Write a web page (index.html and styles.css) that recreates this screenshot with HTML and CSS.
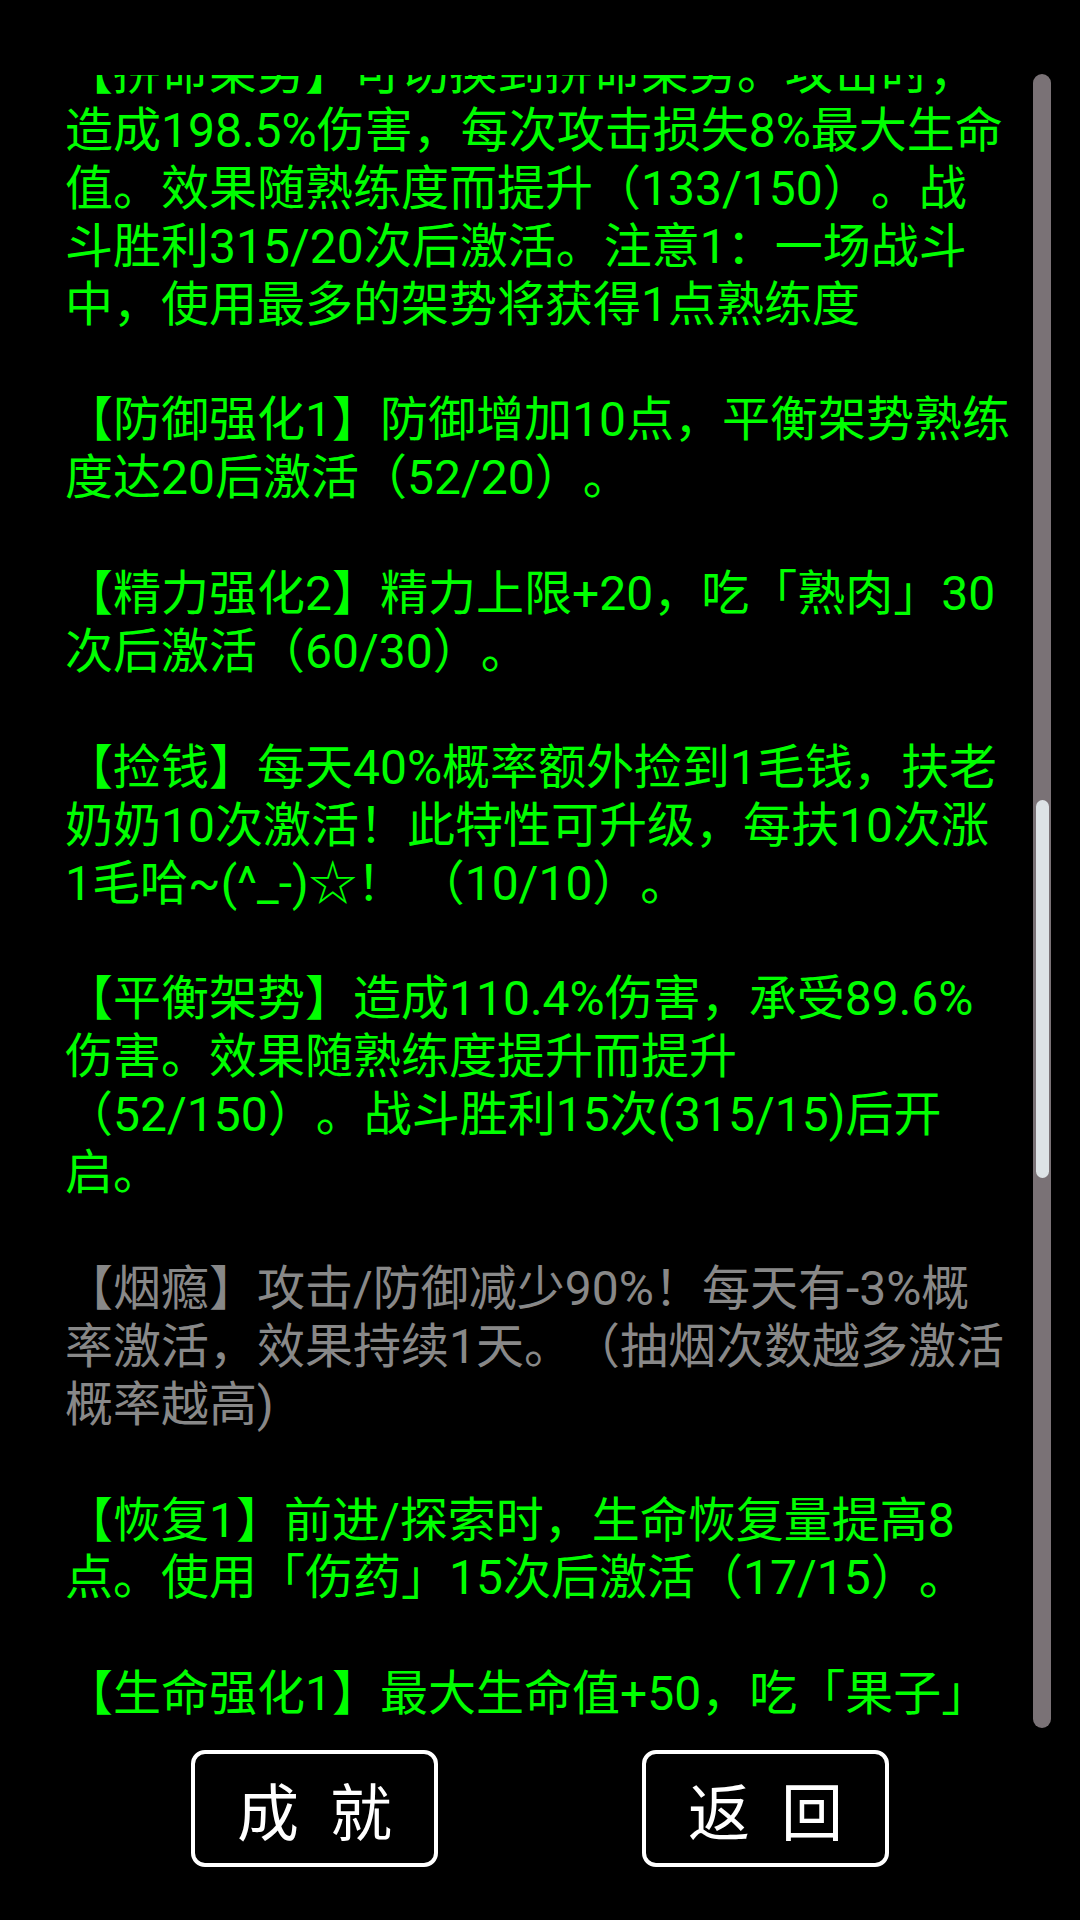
FILE: index.html
```html
<!DOCTYPE html>
<html lang="zh-CN">
<head>
<meta charset="utf-8">
<title>特性</title>
<link rel="stylesheet" href="styles.css">
</head>
<body>
<div class="screen">
  <div class="scroll">
    <div class="viewport">
      <div class="content">
        <p>【拼命架势】可切换到拼命架势。攻击时，<br>造成198.5%伤害，每次攻击损失8%最大生命<br>值。效果随熟练度而提升（133/150）。战<br>斗胜利315/20次后激活。注意1：一场战斗<br>中，使用最多的架势将获得1点熟练度</p>
        <p>【防御强化1】防御增加10点，平衡架势熟练<br>度达20后激活（52/20）。</p>
        <p>【精力强化2】精力上限+20，吃「熟肉」30<br>次后激活（60/30）。</p>
        <p>【捡钱】每天40%概率额外捡到1毛钱，扶老<br>奶奶10次激活！此特性可升级，每扶10次涨<br>1毛哈~(^_-)☆！ （10/10）。</p>
        <p>【平衡架势】造成110.4%伤害，承受89.6%<br>伤害。效果随熟练度提升而提升<br>（52/150）。战斗胜利15次(315/15)后开<br>启。</p>
        <p class="off">【烟瘾】攻击/防御减少90%！每天有-3%概<br>率激活，效果持续1天。（抽烟次数越多激活<br>概率越高)</p>
        <p>【恢复1】前进/探索时，生命恢复量提高8<br>点。使用「伤药」15次后激活（17/15）。</p>
        <p>【生命强化1】最大生命值+50，吃「果子」<br>30次后激活（41/30）。</p>
      </div>
    </div>
    <div class="scrollbar">
      <div class="thumb"></div>
    </div>
  </div>
  <div class="actions">
    <div class="btn"><span class="btn-label">成就</span></div>
    <div class="btn"><span class="btn-label">返回</span></div>
  </div>
</div>
</body>
</html>
```

FILE: styles.css
```css
html, body {
  margin: 0;
  padding: 0;
  background: #000;
}

body {
  width: 1080px;
  height: 1920px;
  overflow: hidden;
  font-family: Roboto, "Noto Sans CJK SC", sans-serif;
}

.screen {
  display: flex;
  flex-direction: column;
  height: 1920px;
}

.scroll {
  display: flex;
  margin-top: 75px;
  height: 1652px;
  flex: none;
}

.viewport {
  flex: none;
  width: 950px;
  margin-left: 65px;
  height: 100%;
  overflow: hidden;
}

.content {
  margin-top: -31px;
  font-size: 48px;
  line-height: 57.9px;
  color: #00ff00;
  white-space: nowrap;
  text-spacing-trim: space-all;
  font-kerning: none;
}

.content p {
  margin: 0 0 57.9px 0;
}

.content p.off {
  color: #888888;
}

.scrollbar {
  flex: none;
  box-sizing: border-box;
  width: 18px;
  height: 1654px;
  margin-top: -1px;
  margin-left: 18px;
  padding: 726px 2px 0 3px;
  background: #7a7276;
  border-radius: 9px;
}

.thumb {
  height: 378px;
  background: #dde3e6;
  border-radius: 7px;
}

.actions {
  display: flex;
  justify-content: center;
  gap: 204px;
  margin-top: 23px;
}

.btn {
  box-sizing: border-box;
  width: 247px;
  height: 117px;
  border: 4px solid #ffffff;
  border-radius: 14px;
  background: #000;
  display: flex;
  align-items: center;
  justify-content: center;
  color: #ffffff;
  font-size: 62px;
  font-family: "Noto Sans CJK SC", sans-serif;
}

.btn-label {
  letter-spacing: 0.5em;
  margin-right: -0.5em;
  line-height: 1;
}
```
